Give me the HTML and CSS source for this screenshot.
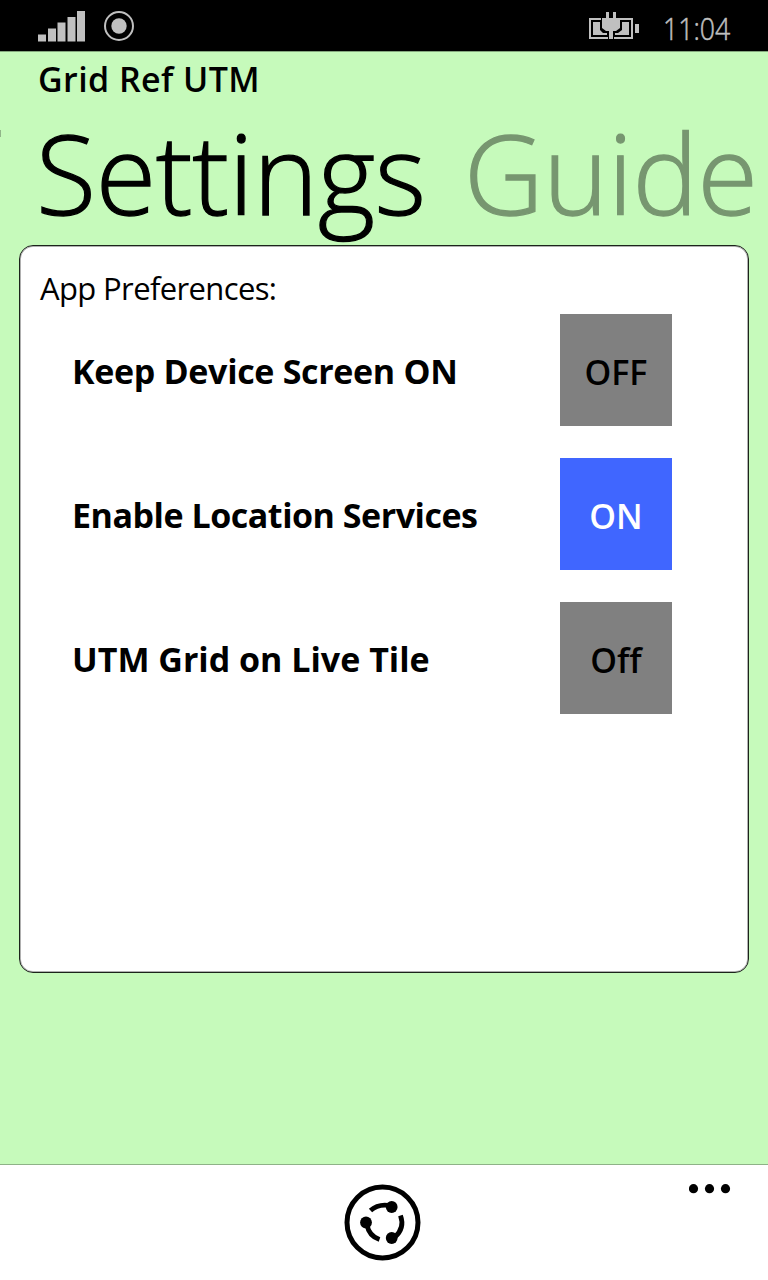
FILE: index.html
```html
<!DOCTYPE html>
<html lang="en">
<head>
<meta charset="utf-8">
<title>Grid Ref UTM</title>
<link rel="stylesheet" href="styles.css">
</head>
<body>
<div class="phone">
  <header class="status">
    <svg class="signal" width="47" height="31" viewBox="0 0 47 31" fill="#c0c0c0"><path d="M0 23.500h8v7H0zM10 17.500h8v13h-8zM19.500 11.500h8v19h-8zM29.500 6h8v24.500h-8zM39 0h8v30.500h-8z"/></svg>
    <svg class="locate" width="30" height="30" viewBox="0 0 30 30"><circle cx="15" cy="15" r="14" fill="none" stroke="#c0c0c0" stroke-width="2"/><circle cx="15" cy="15" r="7.700" fill="#c0c0c0"/></svg>
    <svg class="battery" width="52" height="28" viewBox="0 0 52 28"><path d="M13 7H2v19h18M32 7h12v19H26" fill="none" stroke="#c0c0c0" stroke-width="2"/><path d="M5 10h7v8l3 3h4v2H5zM34 10h7v13H27v-2h3l4-3zM47 12h4v9h-4zM18 0h3v6h4V0h3v6h4v10l-4 3h-3v8h-4v-8h-3l-4-3V6h4z" fill="#c0c0c0"/></svg>
    <span class="time">11:04</span>
  </header>
  <main class="page">
    <div class="app-name">Grid Ref UTM</div>
    <div class="pivot"><span class="previous"></span><h1 class="tab current">Settings</h1><span class="tab next">Guide</span></div>
    <section class="card">
      <h2 class="caption">App Preferences:</h2>
      <div class="row"><span class="label keep">Keep Device Screen ON</span><button class="toggle">OFF</button></div>
      <div class="row"><span class="label location">Enable Location Services</span><button class="toggle on">ON</button></div>
      <div class="row"><span class="label">UTM Grid on Live Tile</span><button class="toggle">Off</button></div>
    </section>
  </main>
  <footer class="appbar">
    <svg class="share" width="78" height="78" viewBox="0 0 78 78"><circle cx="38.500" cy="39.500" r="35.500" fill="none" stroke="#000" stroke-width="5"/><g fill="none" stroke="#000" stroke-width="4.800"><path d="M26.500 27.500Q34 20.500 46 22.500"/><path d="M56.500 32.500Q61 45 51 54"/><path d="M23 42Q25 53 35.500 56.500"/></g><circle cx="47.700" cy="24" r="5.900"/><circle cx="22" cy="39.500" r="5.900"/><circle cx="47.700" cy="55" r="5.900"/></svg>
    <svg class="more" width="42" height="10" viewBox="0 0 42 10"><circle cx="4.500" cy="4.700" r="4.600"/><circle cx="20.500" cy="4.700" r="4.600"/><circle cx="36.500" cy="4.700" r="4.600"/></svg>
  </footer>
</div>
</body>
</html>
```
FILE: styles.css
```css
* { box-sizing: border-box; }
body { margin: 0; }
.phone {
  width: 768px;
  height: 1280px;
  display: flex;
  flex-direction: column;
  overflow: hidden;
  background: #c6fabb;
  color: #000;
  font-family: "Open Sans", "Noto Sans", sans-serif;
}
.status {
  height: 52px;
  flex: none;
  display: flex;
  align-items: flex-start;
  padding: 11px 38px 0;
  background: #000;
  border-bottom: 1px solid #84a77d;
  color: #c0c0c0;
}
.locate { margin-left: 19px; }
.battery { margin: 1px 23px 0 auto; }
.time {
  width: 67px;
  padding-top: 1px;
  font-size: 31px;
  font-weight: 300;
  line-height: 32px;
  -webkit-text-stroke: 0.5px;
  white-space: nowrap;
  transform: scaleX(0.86);
  transform-origin: left;
}
.page { flex: 1; min-height: 0; }
.app-name {
  height: 51px;
  padding: 2px 0 0 38px;
  font-size: 34px;
  font-weight: 600;
  line-height: 49px;
  padding-top: 3px;
  letter-spacing: 0.42px;
}
.pivot {
  height: 142px;
  display: flex;
  white-space: nowrap;
}
.previous {
  width: 1px;
  height: 7px;
  margin: 27px 35px 0 0;
  background: #91b589;
}
.tab {
  margin: 0;
  flex: none;
  font-size: 110px;
  font-weight: 300;
  line-height: 139px;
  letter-spacing: -0.3px;
  -webkit-text-stroke: 1.3px;
}
.current { width: 428px; }
.next { color: #779670; }
.card {
  width: 730px;
  height: 728px;
  margin-left: 19px;
  padding: 22px 76px 0 20px;
  background: #fff;
  border: 1px solid #1c241b;
  border-radius: 14px;
  box-shadow: inset 0 0 0 1px #b0b0b0;
}
.caption {
  margin: 0;
  height: 46px;
  font-size: 31px;
  font-weight: 400;
  line-height: 41px;
  letter-spacing: -0.63px;
}
.row {
  height: 112px;
  margin-bottom: 32px;
  padding-left: 32px;
  display: flex;
  align-items: center;
  justify-content: space-between;
}
.label {
  padding-top: 2px;
  font-size: 34px;
  font-weight: 700;
  white-space: nowrap;
}
.keep { letter-spacing: -0.32px; }
.location { letter-spacing: -0.47px; }
.toggle {
  width: 112px;
  height: 112px;
  flex: none;
  padding: 4px 0 0;
  border: 0;
  background: #808080;
  color: #000;
  font: 600 34px "Open Sans", "Noto Sans", sans-serif;
}
.on { background: #4066ff; color: #fff; }
.appbar {
  height: 116px;
  flex: none;
  display: grid;
  grid-template-columns: 1fr 78px 1fr;
  padding: 18px 37px 0 34px;
  background: #fff;
  border-top: 1px solid #8eb287;
}
.share { grid-column: 2; }
.more { justify-self: end; margin-top: 1px; }
```
